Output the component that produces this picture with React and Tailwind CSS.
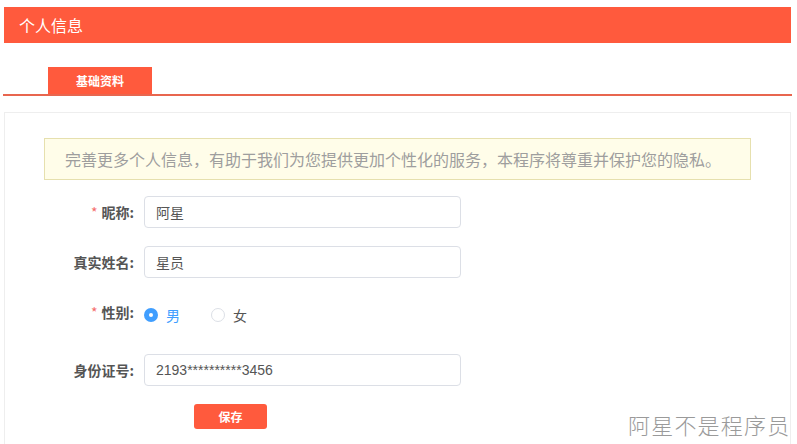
export default function App() {
  return (
    <div className="relative w-[797px] h-[444px] overflow-hidden bg-white pt-[7px] pl-[4px] pr-[6px] flex flex-col font-['Microsoft_YaHei','Noto_Sans_CJK_SC',sans-serif]">
      {/* Header */}
      <div className="h-[36px] bg-[#ff5a3d] text-white text-[16px] leading-[36px] pl-[15px]">个人信息</div>

      {/* Tabs */}
      <div className="mt-[24px] -mx-[1px] border-b-2 border-[#e8664f] pl-[45px] flex">
        <div className="w-[104px] h-[27px] bg-[#ff5a3d] text-white text-[12px] font-bold leading-[27px] text-center">基础资料</div>
      </div>

      {/* Content */}
      <div className="mt-[16px] flex-1 border border-[#eeeeee] border-b-0 pt-[25px]">
        <div className="ml-[39px] w-[707px] h-[42px] bg-[#fffde9] border border-[#e6e0ae] text-[#9e9e9e] text-[16px] leading-[40px] pl-[20px] whitespace-nowrap">
          完善更多个人信息，有助于我们为您提供更加个性化的服务，本程序将尊重并保护您的隐私。
        </div>

        <div className="mt-[16px] flex flex-col text-[14px]">
          <div className="flex items-center h-[32px]">
            <div className="w-[139px] pr-[10px] text-right font-bold text-[#555555]">
              <span className="text-[#f56c6c] font-normal mr-[4px]">*</span>昵称:
            </div>
            <div className="w-[317px] h-[32px] border border-[#dcdfe6] rounded-[4px] pl-[11px] leading-[30px] text-[#555555]">阿星</div>
          </div>

          <div className="mt-[18px] flex items-center h-[32px]">
            <div className="w-[139px] pr-[10px] text-right font-bold text-[#555555]">真实姓名:</div>
            <div className="w-[317px] h-[32px] border border-[#dcdfe6] rounded-[4px] pl-[11px] leading-[30px] text-[#555555]">星员</div>
          </div>

          <div className="mt-[18px] flex items-start h-[32px]">
            <div className="w-[139px] pr-[10px] text-right font-bold text-[#555555] leading-[32px]">
              <span className="text-[#f56c6c] font-normal mr-[4px]">*</span>性别:
            </div>
            <div className="pt-[12px] flex items-center">
              <div className="flex items-center gap-[8px]">
                <span className="w-[14px] h-[14px] rounded-full bg-[#409eff] flex items-center justify-center">
                  <span className="w-[4px] h-[4px] rounded-full bg-white" />
                </span>
                <span className="text-[#409eff] leading-[14px]">男</span>
              </div>
              <div className="ml-[31px] flex items-center gap-[8px]">
                <span className="w-[14px] h-[14px] rounded-full border border-[#dcdfe6] bg-white" />
                <span className="text-[#555555] leading-[14px]">女</span>
              </div>
            </div>
          </div>

          <div className="mt-[26px] flex items-center h-[32px]">
            <div className="w-[139px] pr-[10px] text-right font-bold text-[#555555]">身份证号:</div>
            <div className="w-[317px] h-[32px] border border-[#dcdfe6] rounded-[4px] pl-[11px] leading-[30px] text-[#555555] font-['Liberation_Sans','Noto_Sans_CJK_SC',sans-serif]">2193**********3456</div>
          </div>

          <div className="mt-[18px] pl-[189px] flex">
            <div className="w-[73px] h-[25px] bg-[#ff5a3d] rounded-[3px] text-white text-[12px] font-bold leading-[25px] text-center">保存</div>
          </div>
        </div>
      </div>

      {/* Watermark */}
      <div className="absolute left-[628px] top-[409px] text-[22px] leading-[30px] text-[#9a9a9a] font-light tracking-[1.2px] [text-shadow:0_0_1px_#ffffff]">阿星不是程序员</div>
    </div>
  );
}
